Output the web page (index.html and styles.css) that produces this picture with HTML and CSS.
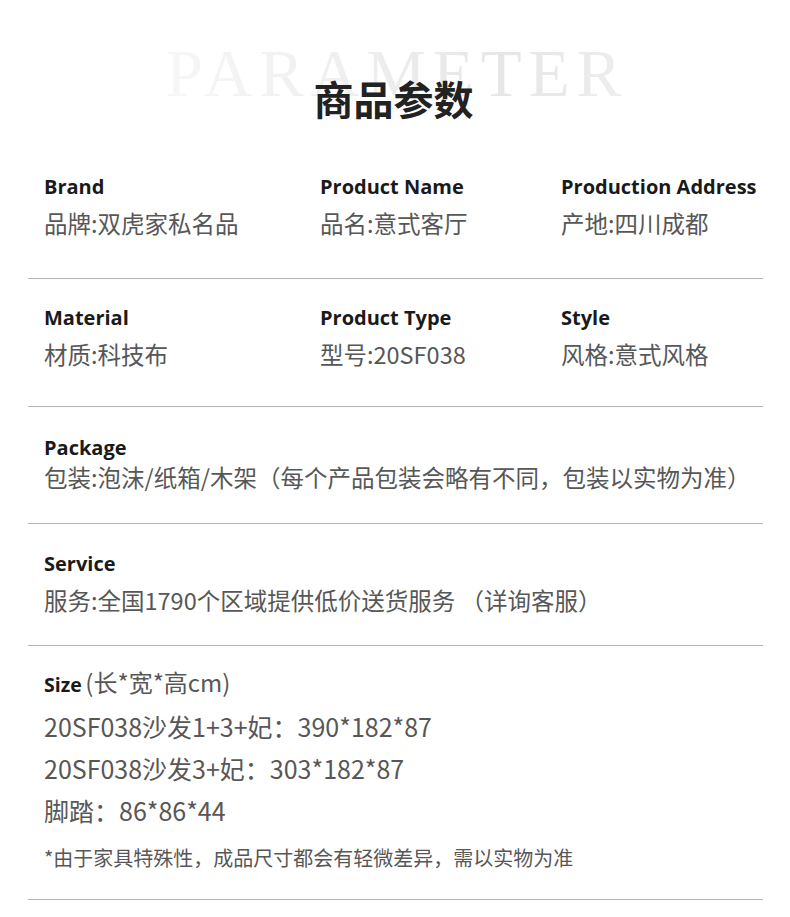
FILE: index.html
```html
<!DOCTYPE html>
<html lang="zh-CN">
	<head>
		<meta charset="UTF-8">
		<title>商品参数</title>
		<link rel="stylesheet" href="styles.css">
	</head>
	<body>
		<div class="page">
			<div class="head">
				<span class="head-bg">PARAMETER</span>
				<h1 class="head-title">商品参数</h1>
			</div>

			<div class="row row-first">
				<div class="cell">
					<span class="label">Brand</span>
					<span class="value">品牌:双虎家私名品</span>
				</div>
				<div class="cell">
					<span class="label">Product Name</span>
					<span class="value">品名:意式客厅</span>
				</div>
				<div class="cell">
					<span class="label">Production Address</span>
					<span class="value">产地:四川成都</span>
				</div>
			</div>

			<div class="row row-second">
				<div class="cell">
					<span class="label">Material</span>
					<span class="value">材质:科技布</span>
				</div>
				<div class="cell">
					<span class="label">Product Type</span>
					<span class="value">型号:20SF038</span>
				</div>
				<div class="cell">
					<span class="label">Style</span>
					<span class="value">风格:意式风格</span>
				</div>
			</div>

			<div class="row row-wide row-package">
				<div class="cell">
					<span class="label">Package</span>
					<span class="value value-tight">包装:泡沫/纸箱/木架（每个产品包装会略有不同，包装以实物为准）</span>
				</div>
			</div>

			<div class="row row-wide row-service">
				<div class="cell">
					<span class="label">Service</span>
					<span class="value">服务:全国1790个区域提供低价送货服务 （详询客服）</span>
				</div>
			</div>

			<div class="row row-wide row-size">
				<div class="cell">
					<div class="size-head"><span class="label label-small">Size</span> <span class="size-unit">(长*宽*高cm)</span></div>
					<span class="size-line">20SF038沙发1+3+妃：390*182*87</span>
					<span class="size-line">20SF038沙发3+妃：303*182*87</span>
					<span class="size-line">脚踏：86*86*44</span>
					<span class="note">*由于家具特殊性，成品尺寸都会有轻微差异，需以实物为准</span>
				</div>
			</div>
		</div>
	</body>
</html>
```

FILE: styles.css
```css
html, body {
	margin: 0;
	padding: 0;
	background: #fff;
}

body {
	font-family: "Noto Sans CJK SC", "Noto Sans", sans-serif;
	color: #575757;
}

.page {
	width: 735px;
	margin-left: 28px;
}

/* header with the pale word behind the title */
.head {
	display: grid;
	justify-items: center;
	padding-top: 39px;
	padding-right: 4px;
}

.head-bg,
.head-title {
	grid-area: 1 / 1;
}

.head-bg {
	font-family: "Liberation Serif", serif;
	font-size: 67px;
	line-height: 68px;
	letter-spacing: 7px;
	padding-left: 7px;
	background: linear-gradient(90deg, #f7f7f7 0%, #efefef 40%, #e6e6e6 75%, #eeeeee 100%);
	-webkit-background-clip: text;
	background-clip: text;
	color: transparent;
}

.head-title {
	margin: 39px 0 0 0;
	font-size: 40px;
	line-height: 40px;
	font-weight: bold;
	color: #222;
}

/* parameter rows */
.row {
	display: grid;
	grid-template-columns: 276px 241px 1fr;
	padding-left: 16px;
	border-bottom: 1px solid #b4b4b4;
}

.row-wide {
	grid-template-columns: 1fr;
}

.row-first {
	padding-top: 56px;
	padding-bottom: 37px;
}

.row-second {
	padding-top: 26px;
	padding-bottom: 34px;
}

.row-package {
	padding-top: 28px;
	padding-bottom: 28px;
}

.row-service {
	padding-top: 27px;
	padding-bottom: 27px;
}

.row-size {
	padding-top: 21px;
	padding-bottom: 24px;
}

.cell {
	display: flex;
	flex-direction: column;
}

.label {
	font-family: "Open Sans", "Noto Sans CJK SC", sans-serif;
	font-weight: bold;
	font-size: 20px;
	line-height: 26px;
	color: #1a1a1a;
}

.label-small {
	font-size: 19.5px;
}

.value {
	margin-top: 5px;
	font-size: 23.5px;
	line-height: 36px;
	white-space: nowrap;
}

.value-tight {
	margin-top: -2px;
}

.size-head {
	line-height: 30px;
}

.size-unit {
	font-size: 24px;
}

.size-line {
	font-size: 25px;
	line-height: 42px;
}

.size-head + .size-line {
	margin-top: 5px;
}

.note {
	margin-top: 10px;
	font-size: 20px;
	line-height: 34px;
}
```
